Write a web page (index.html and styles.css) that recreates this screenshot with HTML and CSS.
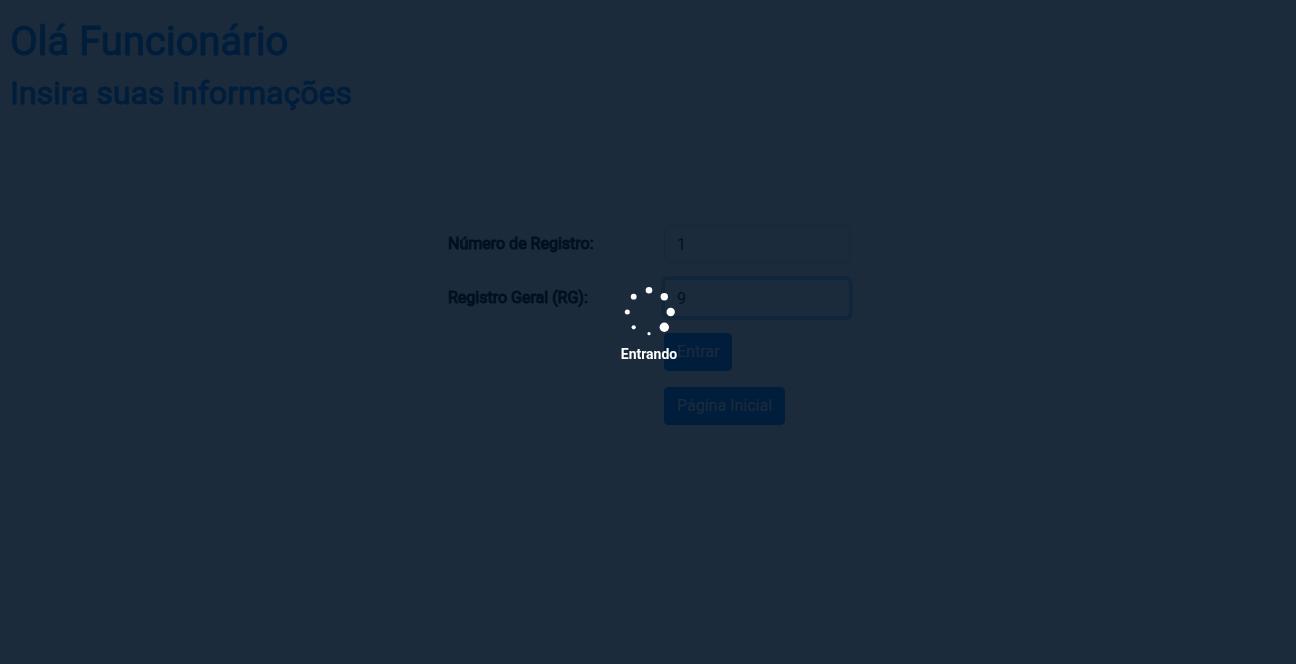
FILE: index.html
```html
<!DOCTYPE html>
<html lang="pt-BR">
<head>
<meta charset="utf-8">
<title>Olá Funcionário</title>
<link rel="stylesheet" href="styles.css">
</head>
<body>
<header class="intro">
  <h1 class="title">Olá Funcionário</h1>
  <h2 class="subtitle">Insira suas informações</h2>
</header>
<main>
  <form class="login">
    <label class="label" for="registro">Número de Registro:</label>
    <input class="field" id="registro" type="text" value="1">
    <label class="label" for="rg">Registro Geral (RG):</label>
    <input class="field field-active" id="rg" type="text" value="9">
    <button class="button" type="submit">Entrar</button>
    <button class="button" type="button">Página Inicial</button>
  </form>
</main>
<div class="overlay" role="status">
  <svg class="spinner" viewBox="0 0 52 52" aria-hidden="true">
    <circle cx="26" cy="4.3" r="3.3"/>
    <circle cx="41.3" cy="10.7" r="3.7"/>
    <circle cx="47.7" cy="26" r="4.2"/>
    <circle cx="41.3" cy="41.3" r="4.7"/>
    <circle cx="26" cy="47.7" r="1.6"/>
    <circle cx="10.7" cy="41.3" r="2.1"/>
    <circle cx="4.3" cy="26" r="2.5"/>
    <circle cx="10.7" cy="10.7" r="2.9"/>
  </svg>
  <p class="status">Entrando</p>
</div>
</body>
</html>
```

FILE: styles.css
```css
* {
  box-sizing: border-box;
}

body {
  margin: 0;
  padding: 0 10px;
  font-family: Roboto, sans-serif;
  font-size: 16px;
  line-height: 24px;
  color: #000;
  background: #fff;
}

.intro {
  padding-top: 18px;
  color: #007bff;
}

.title,
.subtitle {
  margin: 0 0 8px;
  font-weight: 400;
  -webkit-text-stroke: 1px currentColor;
}

.title {
  font-size: 40px;
  line-height: 48px;
}

.subtitle {
  font-size: 32px;
  line-height: 38px;
}

.login {
  display: grid;
  grid-template-columns: 216px 186px;
  row-gap: 16px;
  align-items: center;
  width: 404px;
  margin: 113px auto 0;
  padding-left: 2px;
}

.label {
  -webkit-text-stroke: 1px currentColor;
}

.field {
  width: 100%;
  height: 38px;
  padding: 6px 12px;
  border: 1px solid #ced4da;
  border-radius: 4px;
  font: inherit;
  color: #000;
  background: #fff;
}

.field-active {
  border-color: #80bdff;
  box-shadow: 0 0 0 3px #a6d0ff;
}

.button {
  grid-column: 2;
  justify-self: start;
  padding: 6px 12px;
  border: 1px solid #007bff;
  border-radius: 4px;
  font: inherit;
  color: #fff;
  background: #007bff;
}

.overlay {
  position: fixed;
  inset: 0;
  display: flex;
  flex-direction: column;
  align-items: center;
  justify-content: center;
  gap: 4px;
  padding-left: 2px;
  padding-bottom: 12px;
  color: #fff;
  background: rgba(0, 18, 36, 0.894);
}

.spinner {
  width: 52px;
  height: 52px;
  fill: #fff;
}

.status {
  margin: 0;
  font-size: 14px;
  font-weight: 700;
}
```
